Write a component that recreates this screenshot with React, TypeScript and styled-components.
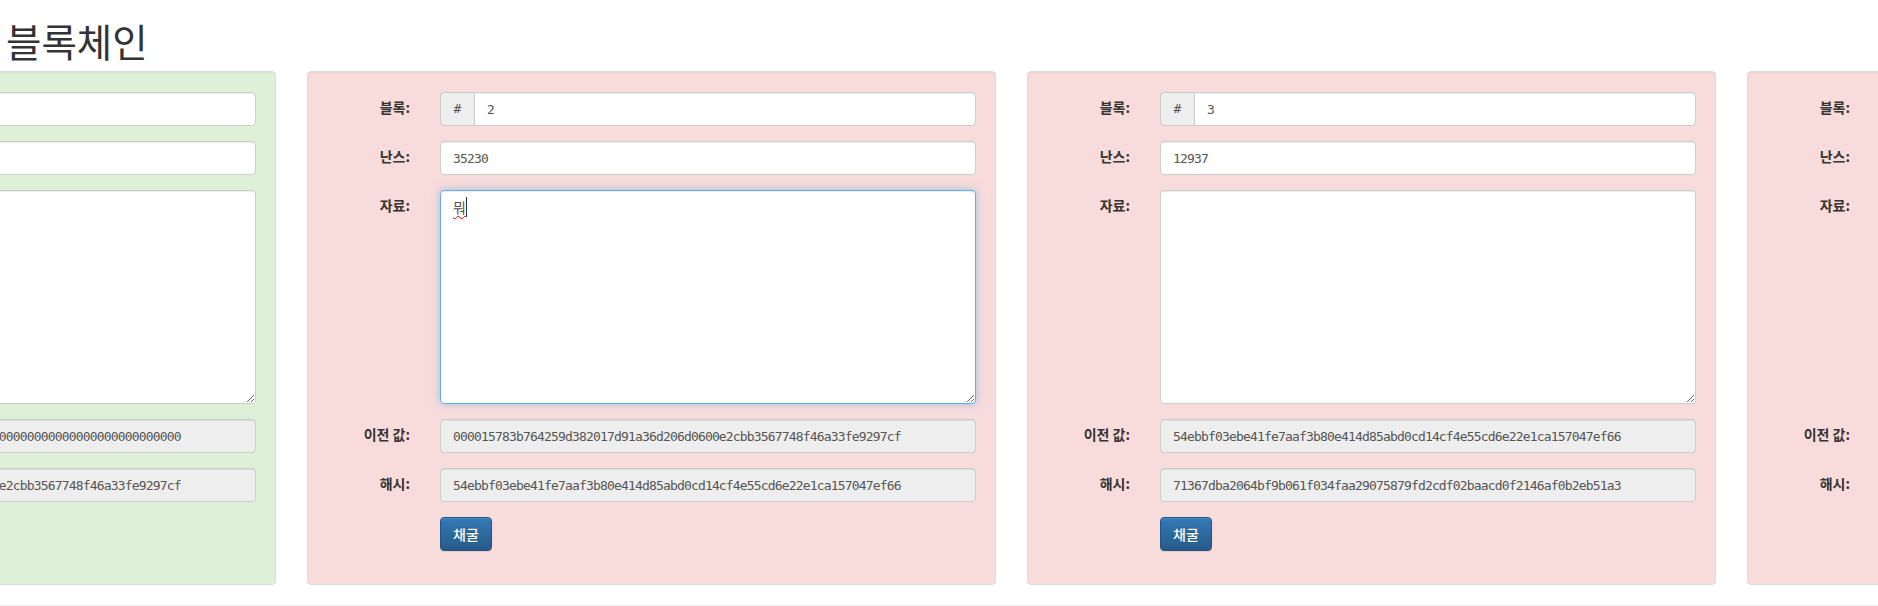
import { useLayoutEffect, useRef } from "react";
import styled, { createGlobalStyle } from "styled-components";

type Block = {
  number: number;
  nonce: string;
  data: string;
  prev: string;
  hash: string;
  valid: boolean;
  focused?: boolean;
};

const ZEROS = "0".repeat(64);

const blocks: Block[] = [
  {
    number: 1,
    nonce: "11316",
    data: "",
    prev: ZEROS,
    hash: "000015783b764259d382017d91a36d206d0600e2cbb3567748f46a33fe9297cf",
    valid: true,
  },
  {
    number: 2,
    nonce: "35230",
    data: "뭐",
    prev: "000015783b764259d382017d91a36d206d0600e2cbb3567748f46a33fe9297cf",
    hash: "54ebbf03ebe41fe7aaf3b80e414d85abd0cd14cf4e55cd6e22e1ca157047ef66",
    valid: false,
    focused: true,
  },
  {
    number: 3,
    nonce: "12937",
    data: "",
    prev: "54ebbf03ebe41fe7aaf3b80e414d85abd0cd14cf4e55cd6e22e1ca157047ef66",
    hash: "71367dba2064bf9b061f034faa29075879fd2cdf02baacd0f2146af0b2eb51a3",
    valid: false,
  },
  {
    number: 4,
    nonce: "35990",
    data: "",
    prev: "71367dba2064bf9b061f034faa29075879fd2cdf02baacd0f2146af0b2eb51a3",
    hash: "a1d4e6b2f58c3079e41d2b6c8f9a03e5d7c2b14f6e8a90d3c5b7e1f2a4d6c8e0",
    valid: false,
  },
];

// how far the chain row is scrolled to the right
const SCROLL_OFFSET = 413;

const GlobalStyle = createGlobalStyle`
  html, body {
    margin: 0;
    padding: 0;
    background: #fff;
  }
  body {
    font-family: "Liberation Sans", "Noto Sans CJK KR", sans-serif;
    font-size: 14px;
    line-height: 1.42857;
    color: #333;
  }
  * { box-sizing: border-box; }
`;

const BlockCard = ({ block }: { block: Block }) => (
  <Well valid={block.valid}>
    <Form>
      <Label>블록:</Label>
      <InputGroup>
        <Addon>#</Addon>
        <GroupInput readOnly value={block.number} />
      </InputGroup>

      <Label>난스:</Label>
      <Input readOnly value={block.nonce} />

      <Label>자료:</Label>
      <TextareaWrap>
        <Textarea
          rows={10}
          readOnly
          value={block.data}
          focused={!!block.focused}
        />
        {block.focused && block.data && <SpellMark>{block.data}</SpellMark>}
      </TextareaWrap>

      <Label>이전 값:</Label>
      <Input disabled value={block.prev} />

      <Label>해시:</Label>
      <Input disabled value={block.hash} />

      <ButtonCell>
        {!block.valid && <MineButton type="button">채굴</MineButton>}
      </ButtonCell>
    </Form>
  </Well>
);

export default function App() {
  const scrollerRef = useRef<HTMLDivElement>(null);

  useLayoutEffect(() => {
    if (scrollerRef.current) scrollerRef.current.scrollLeft = SCROLL_OFFSET;
  }, []);

  return (
    <>
      <GlobalStyle />
      <Page>
        <Title>블록체인</Title>
        <Scroller ref={scrollerRef}>
          <Track>
            {blocks.map((b) => (
              <BlockCard key={b.number} block={b} />
            ))}
          </Track>
        </Scroller>
        <Rule />
      </Page>
    </>
  );
}

const Page = styled.div`
  width: 100%;
`;

const Title = styled.h1`
  margin: 20px 0 10px 6px;
  font-family: "Noto Sans CJK KR", sans-serif;
  font-size: 38.5px;
  font-weight: 400;
  line-height: 41px;
  color: #333;
`;

const Scroller = styled.div`
  overflow: hidden;
  width: 100%;
`;

const Track = styled.div`
  display: flex;
  gap: 31px;
  width: max-content;
`;

const Well = styled.div<{ valid: boolean }>`
  flex: 0 0 689px;
  min-height: 20px;
  padding: 20px 19px 33px;
  border: 1px solid #dcdcdc;
  border-radius: 4px;
  background: ${({ valid }) => (valid ? "#dff0d8" : "#f8dbdb")};
  box-shadow: inset 0 1px 1px rgba(0, 0, 0, 0.05);
`;

const Form = styled.div`
  display: grid;
  grid-template-columns: 83px 1fr;
  column-gap: 30px;
  row-gap: 15px;
`;

const Label = styled.label`
  padding-top: 5px;
  text-align: right;
  font-family: "Noto Sans CJK KR", sans-serif;
  font-size: 14px;
  font-weight: 700;
  line-height: 20px;
  color: #333;
  white-space: nowrap;
`;

const fieldText = `
  font-family: "DejaVu Sans Mono", "Noto Sans CJK KR", monospace;
  font-size: 13px;
  letter-spacing: -0.83px;
  color: #555;
`;

const Input = styled.input`
  display: block;
  width: 100%;
  height: 34px;
  padding: 6px 12px;
  ${fieldText}
  line-height: 20px;
  background: #fff;
  border: 1px solid #ccc;
  border-radius: 4px;
  box-shadow: inset 0 1px 1px rgba(0, 0, 0, 0.075);
  outline: none;

  &:disabled {
    background: #eee;
    color: #555;
    -webkit-text-fill-color: #555;
    opacity: 1;
  }
`;

const InputGroup = styled.div`
  display: flex;
  width: 100%;
`;

const Addon = styled.span`
  flex: 0 0 auto;
  width: 34px;
  height: 34px;
  padding: 6px 0;
  text-align: center;
  ${fieldText}
  letter-spacing: 0;
  line-height: 20px;
  background: #eee;
  border: 1px solid #ccc;
  border-right: 0;
  border-radius: 4px 0 0 4px;
`;

const GroupInput = styled(Input)`
  flex: 1;
  border-radius: 0 4px 4px 0;
`;

const TextareaWrap = styled.div`
  position: relative;
`;

const Textarea = styled.textarea<{ focused: boolean }>`
  display: block;
  width: 100%;
  height: 214px;
  padding: 6px 12px;
  font-family: "Noto Sans CJK KR", sans-serif;
  font-size: 14px;
  line-height: 20px;
  color: #555;
  background: #fff;
  border: 1px solid ${({ focused }) => (focused ? "#66afe9" : "#ccc")};
  border-radius: 4px;
  box-shadow: ${({ focused }) =>
    focused
      ? "inset 0 1px 1px rgba(0,0,0,.075), 0 0 8px rgba(102,175,233,.6)"
      : "inset 0 1px 1px rgba(0,0,0,.075)"};
  outline: none;
  resize: vertical;
`;

const SpellMark = styled.span`
  position: absolute;
  top: 7px;
  left: 13px;
  font-family: "Noto Sans CJK KR", sans-serif;
  font-size: 14px;
  line-height: 20px;
  color: transparent;
  text-decoration: underline wavy #e00;
  text-decoration-thickness: 1px;
  text-underline-offset: 2px;
  border-right: 1px solid #333;
  pointer-events: none;
`;

const ButtonCell = styled.div`
  grid-column: 2;
  min-height: 34px;
`;

const MineButton = styled.button`
  display: inline-block;
  height: 34px;
  padding: 6px 12px;
  font-family: "Noto Sans CJK KR", sans-serif;
  font-size: 14px;
  font-weight: 500;
  line-height: 20px;
  color: #fff;
  text-shadow: 0 -1px 0 rgba(0, 0, 0, 0.2);
  background-image: linear-gradient(to bottom, #337ab7 0, #265a88 100%);
  border: 1px solid #245580;
  border-radius: 4px;
  box-shadow: inset 0 1px 0 rgba(255, 255, 255, 0.15),
    0 1px 1px rgba(0, 0, 0, 0.075);
  cursor: pointer;
`;

const Rule = styled.hr`
  margin: 20px 0 0;
  border: 0;
  border-top: 1px solid #eee;
`;
